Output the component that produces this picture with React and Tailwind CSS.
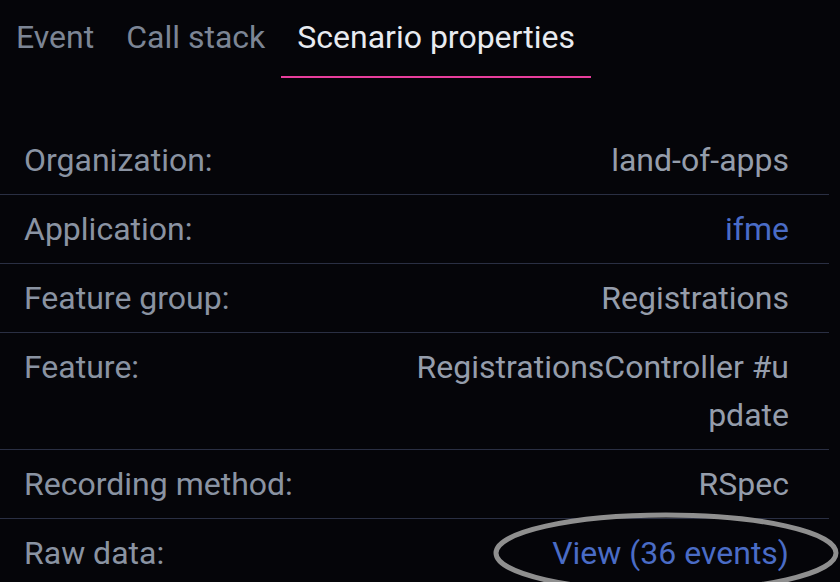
import React, { useState } from 'react';

const tabs = ['Event', 'Call stack', 'Scenario properties'];

const rows = [
    { label: 'Organization:', value: ['land-of-apps'] },
    { label: 'Application:', value: ['ifme'], link: true },
    { label: 'Feature group:', value: ['Registrations'] },
    { label: 'Feature:', value: ['RegistrationsController #u', 'pdate'] },
    { label: 'Recording method:', value: ['RSpec'] },
    { label: 'Raw data:', value: ['View (36 events)'], link: true },
];

const App = () => {
    const [active, setActive] = useState(2);

    return (
        <div
            className="relative w-[840px] h-[582px] overflow-hidden bg-[#050509] text-[32px] leading-[48px]"
            style={{ fontFamily: 'Roboto, "Noto Sans", sans-serif' }}
        >
            {/* Tabs */}
            <div className="flex pt-[13px]">
                {tabs.map((tab, i) => (
                    <button
                        key={tab}
                        onClick={() => setActive(i)}
                        className={
                            i === active
                                ? 'px-4 pb-[15px] border-b-2 border-[#e83e9c] text-[#e8ebf0]'
                                : 'px-4 pb-[15px] border-b-2 border-transparent text-[#7c8595]'
                        }
                    >
                        {tab}
                    </button>
                ))}
            </div>

            {/* Properties */}
            <div className="mt-[48px] w-[829px]">
                {rows.map(row => (
                    <div
                        key={row.label}
                        className="flex justify-between pl-6 pr-10 py-[10px] border-b border-[#2a2f43] last:border-b-0"
                    >
                        <div className="text-[#8a93a2]">{row.label}</div>
                        <div className={row.link ? 'text-right text-[#4a6cc6]' : 'text-right text-[#959dab]'}>
                            {row.value.map(line => (
                                <div key={line}>{line}</div>
                            ))}
                        </div>
                    </div>
                ))}
            </div>

            {/* Annotation ring */}
            <svg className="absolute left-[490px] top-[508px]" width="350" height="90" viewBox="0 0 350 90">
                <ellipse cx="176" cy="45" rx="170" ry="38" fill="none" stroke="#8f8f8f" strokeWidth="5" />
            </svg>
        </div>
    );
};

export default App;
